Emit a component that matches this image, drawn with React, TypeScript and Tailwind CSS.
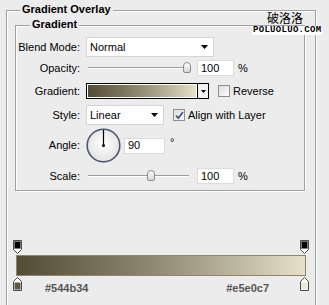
import React from "react";

const etched = "border border-[#a0a0a0] shadow-[inset_1px_1px_0_#fff,1px_1px_0_#fff]";

function Arrow() {
  return (
    <svg width="7" height="4" viewBox="0 0 7 4">
      <path d="M0 0H7L3.5 4Z" fill="#000" />
    </svg>
  );
}

function Select({ value, width }: { value: string; width: string }) {
  return (
    <div
      className={`${width} h-[20px] bg-white border border-[#d4d4d4] flex items-center justify-between pl-[3px] pr-[5px]`}
    >
      <span>{value}</span>
      <Arrow />
    </div>
  );
}

function Slider({ pos }: { pos: number }) {
  return (
    <div className="relative w-[111px] h-[16px]">
      <div className="absolute left-[2px] top-[7px] w-[101px] h-[1px] bg-[#9c9c9c] shadow-[0_1px_0_#fff]" />
      <div
        className="absolute top-[2px] w-[8px] h-[11px] rounded-t-[4px] rounded-b-[2px] border border-[#8c8c8c] bg-gradient-to-b from-white to-[#d6d6d6]"
        style={{ left: pos }}
      />
    </div>
  );
}

function NumInput({ value, width }: { value: string; width: string }) {
  return (
    <div className={`${width} h-[16px] bg-white border border-[#dcdcdc] pl-[3px] flex items-center`}>
      {value}
    </div>
  );
}

function Checkbox({ checked }: { checked?: boolean }) {
  return (
    <div className="w-[12px] h-[12px] border border-[#8e8f8f] bg-gradient-to-br from-[#dcdcdc] to-white flex items-center justify-center">
      {checked && (
        <svg width="9" height="9" viewBox="0 0 9 9">
          <path d="M1 4.5 L3.3 7 L8 1" fill="none" stroke="#3d5a86" strokeWidth="1.8" />
        </svg>
      )}
    </div>
  );
}

function TopStop() {
  return (
    <svg width="9" height="14" viewBox="0 0 9 14">
      <path d="M0.5 0.5H8.5V9.5L4.5 13.5L0.5 9.5Z" fill="#fff" stroke="#4a4a4a" />
      <rect x="1.5" y="1.5" width="6" height="7" fill="#000" stroke="#777" strokeWidth="0.6" />
    </svg>
  );
}

function BottomStop({ color }: { color: string }) {
  return (
    <svg width="9" height="14" viewBox="0 0 9 14">
      <path d="M4.5 0.5L8.5 4.5V13.5H0.5V4.5Z" fill="#fff" stroke="#4a4a4a" />
      <rect x="1.5" y="5.5" width="6" height="7" fill={color} />
    </svg>
  );
}

function Row({ label, className, children }: { label: string; className: string; children: React.ReactNode }) {
  return (
    <div className={`flex items-center ${className}`}>
      <div className="w-[65px] text-right pr-[1px]">{label}</div>
      <div className="ml-[5px] flex items-center">{children}</div>
    </div>
  );
}

export default function App() {
  return (
    <div className="relative w-[329px] h-[305px] overflow-hidden bg-[#ececec] font-['Liberation_Sans',Arial,sans-serif] text-[11px] leading-[13px] text-black">
      <div className={`relative ml-[6px] mt-[10px] w-[310px] h-[300px] ${etched}`}>
        <span className="absolute left-[13px] top-[-8px] px-[2px] bg-[#ececec] font-bold">Gradient Overlay</span>

        <div className={`relative ml-[8px] mt-[14px] w-[290px] h-[166px] pt-[11px] ${etched}`}>
          <span className="absolute left-[14px] top-[-8px] px-[2px] bg-[#ececec] font-bold">Gradient</span>

          <Row label="Blend Mode:" className="h-[20px]">
            <Select value="Normal" width="w-[128px]" />
          </Row>

          <Row label="Opacity:" className="h-[16px] mt-[3px]">
            <Slider pos={97} />
            <NumInput value="100" width="w-[37px]" />
            <span className="ml-[4px]">%</span>
          </Row>

          <Row label="Gradient:" className="h-[16px] mt-[7px]">
            <div className="w-[123px] h-[16px] border border-black flex">
              <div className="flex-1 border border-white bg-gradient-to-r from-[#544b34] via-[#938d76] to-[#e5e0c7]" />
              <div className="w-[11px] border-l border-black bg-[#f2f2f2] flex items-center justify-center">
                <svg width="5" height="3" viewBox="0 0 5 3">
                  <path d="M0 0H5L2.5 3Z" fill="#000" />
                </svg>
              </div>
            </div>
            <div className="ml-[9px]">
              <Checkbox />
            </div>
            <span className="ml-[3px]">Reverse</span>
          </Row>

          <Row label="Style:" className="h-[20px] mt-[6px]">
            <Select value="Linear" width="w-[78px]" />
            <div className="ml-[9px]">
              <Checkbox checked />
            </div>
            <span className="ml-[3px]">Align with Layer</span>
          </Row>

          <Row label="Angle:" className="h-[35px] mt-[3px]">
            <svg width="35" height="35" viewBox="0 0 35 35">
              <defs>
                <radialGradient id="dial" cx="50%" cy="45%" r="55%">
                  <stop offset="0%" stopColor="#ffffff" />
                  <stop offset="100%" stopColor="#e2e2e2" />
                </radialGradient>
              </defs>
              <circle cx="17.5" cy="17.5" r="16.3" fill="url(#dial)" stroke="#4e5573" strokeWidth="1.6" />
              <line x1="17.5" y1="17.5" x2="17.5" y2="2" stroke="#000" strokeWidth="1.2" />
              <circle cx="17.5" cy="17.5" r="1.5" fill="#000" />
            </svg>
            <div className="ml-[3px]">
              <NumInput value="90" width="w-[41px]" />
            </div>
            <span className="ml-[5px] -mt-[6px]">°</span>
          </Row>

          <Row label="Scale:" className="h-[16px] mt-[5px]">
            <Slider pos={61} />
            <NumInput value="100" width="w-[37px]" />
            <span className="ml-[4px]">%</span>
          </Row>
        </div>

        <div className="ml-[6px] mt-[49px] w-[296px] flex justify-between">
          <TopStop />
          <TopStop />
        </div>
        <div className="ml-[9px] mt-[1px] w-[290px] h-[21px] border border-[#8a8770] bg-gradient-to-r from-[#544b34] via-[#938d76] to-[#e5e0c7]" />
        <div className="ml-[6px] mt-[1px] w-[296px] flex items-start">
          <BottomStop color="#5e5745" />
          <span className="ml-[23px] mt-[5px] font-bold text-[#555]">#544b34</span>
          <span className="ml-auto mr-[31px] mt-[5px] font-bold text-[#555]">#e5e0c7</span>
          <BottomStop color="#ece8d6" />
        </div>
      </div>

      <div className="absolute left-[267px] top-[11px] font-['Noto_Sans_CJK_SC',sans-serif] text-[12px] leading-[14px] text-black">
        破洛洛
      </div>
      <div className="absolute left-[252px] top-[26px] h-[9px] px-[1px] bg-white font-['Liberation_Mono',monospace] font-bold text-[9px] leading-[9px] tracking-[0.3px] text-black">
        POLUOLUO.COM
      </div>
    </div>
  );
}
